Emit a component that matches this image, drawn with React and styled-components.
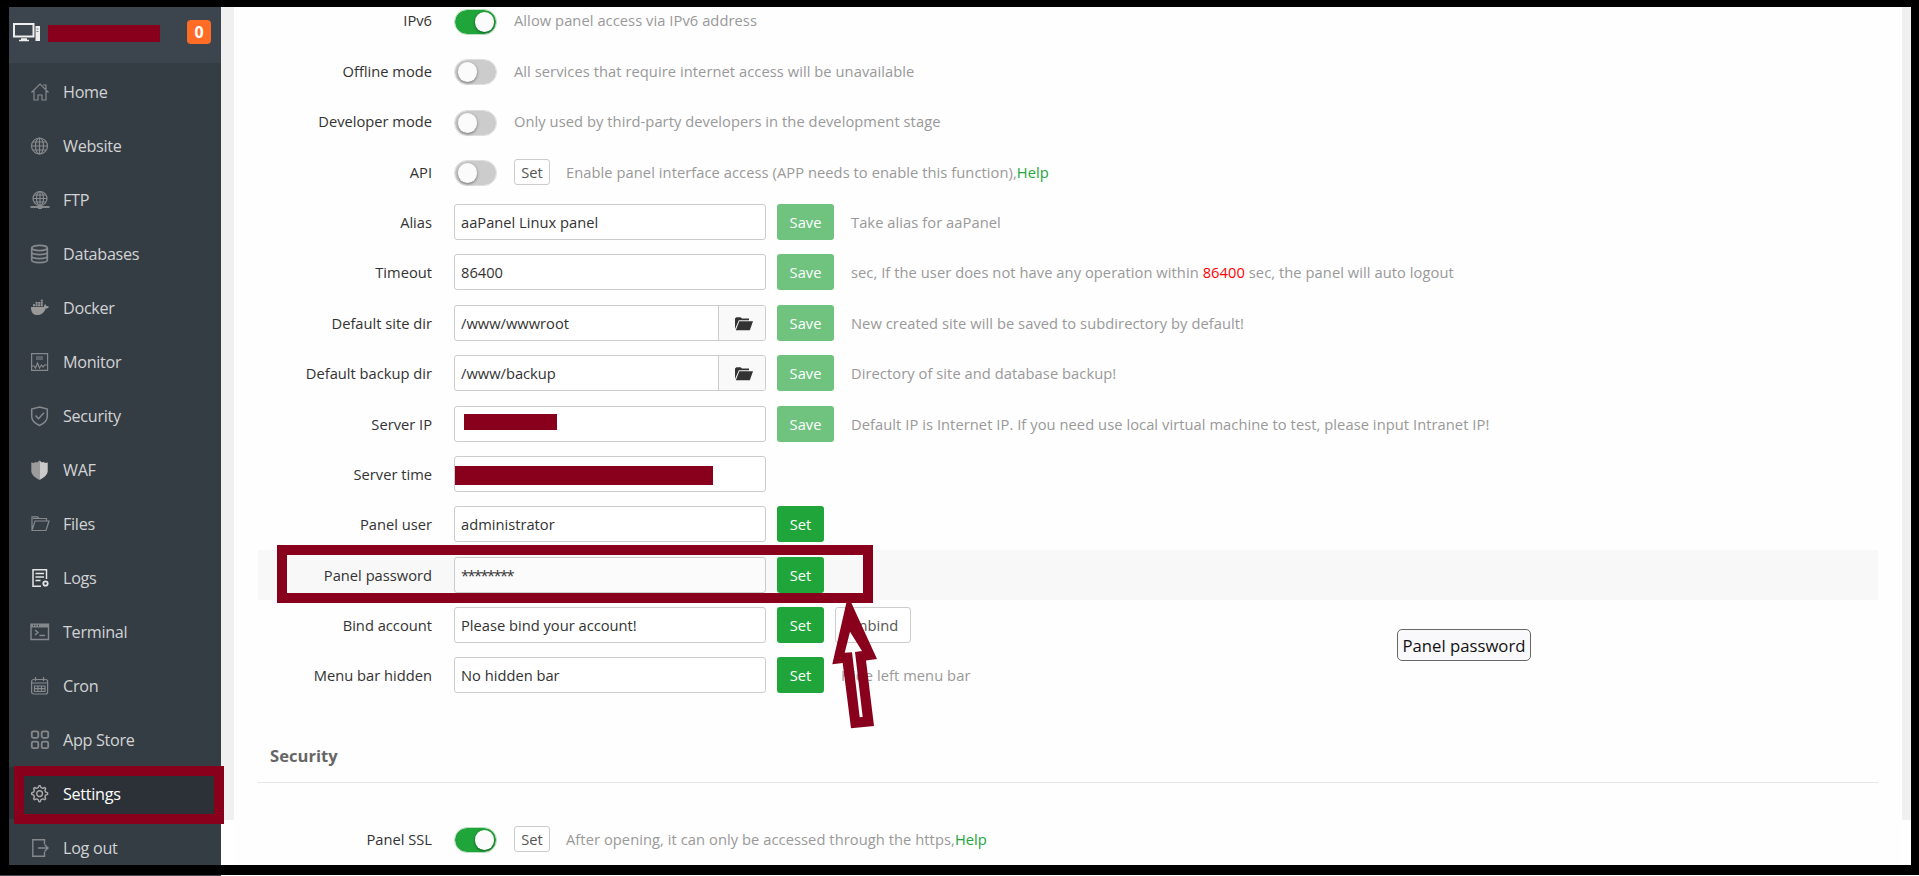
import React from "react";
import styled, { createGlobalStyle } from "styled-components";

const GlobalStyle = createGlobalStyle`
  * {
    box-sizing: border-box;
  }
  body {
    margin: 0;
    overflow: hidden;
    background: #000;
    font-family: "Open Sans", "Noto Sans", sans-serif;
  }
`;

const Page = styled.div`
  position: relative;
  display: flex;
  flex-direction: column;
  width: 1919px;
  height: 876px;
  overflow: hidden;
  background: #000;
`;

const Screen = styled.div`
  display: flex;
  height: 858px;
  margin: 7px 8px 10px 9px;
  background: #fff;
`;

const BottomEdge = styled.div`
  height: 1px;
  background: #fff;
  border-left: 221px solid #42464d;
`;

const Sidebar = styled.aside`
  width: 212px;
  overflow: hidden;
  background: #353d44;
`;

const SidebarHeader = styled.div`
  display: flex;
  align-items: center;
  height: 56px;
  padding: 0 10px 6px 4px;
  background: #3c444d;
`;

const Redacted = styled.span`
  display: block;
  width: ${props => props.$width}px;
  height: ${props => props.$height}px;
  margin: ${props => props.$margin || "0"};
  background: #88001b;
`;

const MessageBadge = styled.span`
  width: 24px;
  height: 24px;
  margin-left: auto;
  border-radius: 4px;
  background: #ff6c26;
  color: white;
  font-size: 16px;
  font-weight: 700;
  line-height: 25px;
  text-align: center;
`;

const MenuItem = styled.div`
  display: flex;
  align-items: center;
  gap: 14px;
  height: 52px;
  margin-top: 2px;
  padding-left: 22px;
  color: ${props => props.$active ? "#fff" : "#d2d3d4"};
  background: ${props => props.$active ? "#2c3138" : "transparent"};
  font-size: 16.2px;
  letter-spacing: -0.3px;
  svg {
    width: 18px;
    height: 18px;
    margin-top: 1px;
    flex: none;
    overflow: visible;
    color: ${props => props.$bright ? "#e4e4e4" : "#85898c"};
  }
  span {
    padding-top: 2px;
  }
`;

const Gutter = styled.div`
  width: ${props => props.$width}px;
  height: 813px;
  background: #f0f0f0;
`;

const Content = styled.main`
  width: 1668px;
  padding: 0 24px;
  overflow: hidden;
  background: #fefefe;
`;

const Form = styled.div`
  margin-top: ${props => props.$top}px;
`;

const FormRow = styled.div`
  display: flex;
  align-items: center;
  height: 50.4px;
  background: ${props => props.$hover ? "#f8f8f8" : "transparent"};
  color: #333;
  font-size: 14.7px;
  white-space: nowrap;
`;

const Label = styled.div`
  width: 174px;
  margin-right: 22px;
  text-align: right;
`;

const Switch = styled.div`
  display: flex;
  align-items: center;
  justify-content: ${props => props.$on ? "flex-end" : "flex-start"};
  width: 43px;
  height: 26px;
  margin: 3px 17px 0 0;
  padding: 0 ${props => props.$on ? 2 : 3}px;
  border: 1px solid ${props => props.$on ? "#b9dfc1" : "#dedede"};
  border-radius: 13px;
  background: ${props => props.$on ? "#20a53a" : "#ccc"};
  background-clip: padding-box;
  span {
    width: 19px;
    height: 20px;
    border-radius: 10px;
    background: #fbfbfb;
    box-shadow: 0 1px 3px rgba(0, 0, 0, 0.45);
  }
`;

const Field = styled.div`
  display: flex;
  align-items: center;
  width: 312px;
  height: 36px;
  padding-left: ${props => props.$flush ? 0 : 6}px;
  border: 1px solid #ccc;
  border-radius: 3px;
  background: ${props => props.$hover ? "#fbfbfb" : "#fff"};
`;

const Secret = styled.span`
  letter-spacing: -1.6px;
`;

const FolderButton = styled.div`
  display: flex;
  align-items: center;
  justify-content: center;
  width: 47px;
  height: 34px;
  margin-left: auto;
  padding: 2px 0 0 3px;
  border-left: 1px solid #ccc;
  border-radius: 0 2px 2px 0;
  background: #f9f9f9;
  color: #333;
`;

const Button = styled.div`
  display: flex;
  align-items: center;
  justify-content: center;
  width: ${props => props.$save ? 57 : 47}px;
  height: 36px;
  margin-left: 11px;
  border-radius: 3px;
  background: ${props => props.$save ? "#6fc37f" : "#20a53a"};
  color: white;
`;

const PlainButton = styled(Button)`
  width: ${props => props.$width}px;
  height: ${props => props.$small ? 26 : 36}px;
  margin-left: ${props => props.$small ? 0 : 11}px;
  border: 1px solid #ccc;
  background: #fff;
  color: #555;
`;

const Hint = styled.div`
  margin-left: ${props => props.$left || 0}px;
  color: #999;
  letter-spacing: 0.06px;
  a {
    color: #20a53a;
  }
  em {
    color: #f00;
    font-style: normal;
  }
`;

const SectionTitle = styled.h2`
  height: 82px;
  margin: 0;
  padding: 43px 0 0 12px;
  border-bottom: 1px solid #e6e6e6;
  color: #666;
  font-size: 16.6px;
  font-weight: 700;
  line-height: 24px;
`;

const Tooltip = styled.div`
  position: absolute;
  left: 1397px;
  top: 629px;
  width: 134px;
  height: 32px;
  border: 1px solid #676767;
  border-radius: 5px;
  background: #f9f9fb;
  color: #111;
  font-size: 16.7px;
  line-height: 32px;
  text-align: center;
  white-space: nowrap;
`;

// red frames drawn over the page
const Marker = styled.div`
  position: absolute;
  left: ${props => props.$x}px;
  top: ${props => props.$y}px;
  width: ${props => props.$width}px;
  height: ${props => props.$height}px;
  border: 10px solid #88001b;
`;

const Arrow = styled.svg`
  position: absolute;
  left: 830px;
  top: 596px;
`;

const Line = ({ children, width = 1.2 }) => (
  <svg viewBox="0 0 18 18" fill="none" stroke="currentColor" strokeWidth={width}>
    {children}
  </svg>
);

const icons = {
  home: (
    <Line>
      <path d="M.5 9.5 9 1l8.500 8.500M3 8v9h4v-5h4v5h4V8M12 2h3v4" />
    </Line>
  ),
  website: (
    <Line>
      <circle cx="8.500" cy="9" r="8" />
      <ellipse cx="8.500" cy="9" rx="4" ry="8" />
      <path d="M8.500 1v16M.5 9h16M2 5h13M2 13h13" />
    </Line>
  ),
  ftp: (
    <Line>
      <circle cx="9" cy="7.500" r="7" />
      <ellipse cx="9" cy="7.500" rx="3.500" ry="7" />
      <path d="M9 .5v14M2 7.500h14M3 4h12M3 11h12" />
      <path d="M-.5 16h19M7 16h4" strokeWidth="1.800" />
      <path d="M7 16h4" strokeWidth="4" />
    </Line>
  ),
  databases: (
    <Line width={1.7}>
      <ellipse cx="8.500" cy="3" rx="7.800" ry="2.600" />
      <path d="M.7 3v12c0 3.400 15.600 3.400 15.600 0V3M.7 7c0 3.400 15.600 3.400 15.600 0M.7 11c0 3.400 15.600 3.400 15.600 0" />
    </Line>
  ),
  docker: (
    <svg viewBox="0 0 18 18" fill="#999">
      <path d="M0 8h12.600c1-.8.6-2.300 1.400-3 .9.600 1.200 1.300 1.100 2 1.100-.1 2.100.1 2.900.7-.6 1.300-1.700 1.800-3.300 1.800C13.200 13.500 10.600 16 6.500 16 2 16-.1 13.600 0 8Z" />
      <path d="M2 5.300h2v2H2zM4.600 5.300h2v2h-2zM7.200 5.300h2v2h-2zM9.800 5.300h2v2h-2zM4.600 3h2v1.800h-2zM7.200 3h2v1.800h-2zM9.800 3h2v1.800h-2zM9.800.8h2v1.700h-2z" />
    </svg>
  ),
  monitor: (
    <Line>
      <path d="M.6.6h16v16.800H.6zM5 4h7M5 6h7" />
      <path d="M1 13h2l1.500 2 2-5 2 5 2-3 1.500 2 1.500-2h3" />
    </Line>
  ),
  security: (
    <Line width={1.5}>
      <path d="M8.500 0 16.300 2v7.500c0 4-3.300 7-7.800 9-4.500-2-7.800-5-7.800-9V2Z" />
      <path d="m4.500 8.500 3 3.200 5.500-6" />
    </Line>
  ),
  waf: (
    <svg viewBox="0 0 18 18">
      <path d="M8.500-.5 6 1.500 4 .8 3.500 2 .3 1.500V10c0 3.500 3.500 6.500 8.200 9Z" fill="#9b9b9b" />
      <path d="m8.500-.5 2.500 2 2-.7.500 1.200 3.200-.5V10c0 3.500-3.500 6.500-8.200 9Z" fill="#cacaca" />
    </svg>
  ),
  files: (
    <Line>
      <path d="M1 15.500V1.800h5.500L8 3.500h7.500V6M1 15.500 4 6h14l-3 9.500ZM2 3.500h6" />
    </Line>
  ),
  logs: (
    <Line width={1.5}>
      <path d="M10 17.300H2V.8h13.500V10M4.500 4.500h8.500M4.500 8h8.500M4.500 11.500h5" />
      <circle cx="14.500" cy="14.500" r="2.200" strokeWidth="1.800" />
    </Line>
  ),
  terminal: (
    <Line width={1.4}>
      <path d="M0 1.200h17.500v15.300H0z" />
      <path d="M0 3h17.500" strokeWidth="3" />
      <path d="m4 7 3 2.500L4 12M8.500 12.500H14" />
      <path d="M2 2.500h1M4.500 2.500h1M7 2.500h1" stroke="#353d44" />
    </Line>
  ),
  cron: (
    <Line>
      <rect x=".6" y="2.500" width="16" height="14.500" rx="2" />
      <path d="M1 6h15.500M4.500 0v4M12.500 0v4M3.500 9h10.500v5.500H3.500zM3.500 11.700H14M7 9v5.500M10.500 9v5.500" />
    </Line>
  ),
  store: (
    <Line width={1.8}>
      <rect x=".8" y=".3" width="6.500" height="6.500" rx="1.500" />
      <rect x="10.700" y=".3" width="6.500" height="6.500" rx="1.500" />
      <rect x=".8" y="10.700" width="6.500" height="6.500" rx="1.500" />
      <rect x="10.700" y="10.700" width="6.500" height="6.500" rx="1.500" />
    </Line>
  ),
  settings: (
    <svg viewBox="0 0 18 18" fill="none" stroke="#aaa" strokeWidth="1.400" strokeLinejoin="round">
      <path d="M7.200 2.600 8 .7h1.200l.8 1.900 1.800.7 1.900-.8 1 .9-.8 2 .7 1.600 2 .8v1.500l-2 .8-.7 1.700.8 2-1 .9-1.900-.8-1.800.8-.8 2H8l-.8-2-1.700-.8-1.900.8-1-.9.8-2-.7-1.700-2-.8V7.800l2-.8.7-1.600-.8-2 1-.9 1.900.8Z" />
      <circle cx="8.600" cy="8.600" r="2.900" />
    </svg>
  ),
  logout: (
    <Line width={1.4}>
      <path d="M13.500 5V.7H1.800v16.600h11.700V13M7 9h10M13.500 5.500 17 9l-3.500 3.500" />
    </Line>
  )
};

const menus = [
  { name: "Home", icon: "home" },
  { name: "Website", icon: "website" },
  { name: "FTP", icon: "ftp" },
  { name: "Databases", icon: "databases" },
  { name: "Docker", icon: "docker" },
  { name: "Monitor", icon: "monitor" },
  { name: "Security", icon: "security" },
  { name: "WAF", icon: "waf" },
  { name: "Files", icon: "files" },
  { name: "Logs", icon: "logs", bright: true },
  { name: "Terminal", icon: "terminal" },
  { name: "Cron", icon: "cron" },
  { name: "App Store", icon: "store" },
  { name: "Settings", icon: "settings", active: true },
  { name: "Log out", icon: "logout" }
];

const ComputerIcon = () => (
  <svg width="28" height="20" viewBox="0 0 28 20" fill="none" stroke="#eee">
    <path d="M1 2h19.500v12.500H1z" strokeWidth="2" />
    <path d="M8 17h6M6 18.500h10" strokeWidth="1.500" />
    <path d="M22.500 4h4.500v15h-4.500z" fill="#eee" stroke="none" />
    <path d="M23.500 7h2M23.500 9.500h2" stroke="#7d838a" />
  </svg>
);

const FolderIcon = () => (
  <svg width="18" height="14" viewBox="0 0 18 14" fill="currentColor">
    <path d="M0 12V1.500L1.500.3h4L7 1.500h7v1.700H3.800L0 12Z" />
    <path d="M4.300 4.300H18L14.800 13.300H.8Z" />
  </svg>
);

const SwitchRow = ({ label, on, set, children }) => (
  <FormRow>
    <Label>{label}</Label>
    <Switch $on={on}><span /></Switch>
    {set && <PlainButton $small $width={36}>Set</PlainButton>}
    <Hint $left={set ? 16 : 0}>{children}</Hint>
  </FormRow>
);

const FieldRow = ({ label, value, folder, button, hover, flush, extra, children }) => (
  <FormRow $hover={hover}>
    <Label>{label}</Label>
    <Field $hover={hover} $flush={flush}>
      {value}
      {folder && <FolderButton><FolderIcon /></FolderButton>}
    </Field>
    {button && <Button $save={button === "Save"}>{button}</Button>}
    {extra}
    {children && <Hint $left={17}>{children}</Hint>}
  </FormRow>
);

const App = () => {
  return (
    <Page>
      <GlobalStyle />
      <Screen>
        <Sidebar>
          <SidebarHeader>
            <ComputerIcon />
            <Redacted $width={112} $height={17} $margin="3px 0 0 7px" />
            <MessageBadge>0</MessageBadge>
          </SidebarHeader>
          {menus.map(menu => (
            <MenuItem key={menu.name} $active={menu.active} $bright={menu.bright}>
              {icons[menu.icon]}
              <span>{menu.name}</span>
            </MenuItem>
          ))}
        </Sidebar>
        <Gutter $width={13} />
        <Content>
          <Form $top={-11.8}>
            <SwitchRow label="IPv6" on>Allow panel access via IPv6 address</SwitchRow>
            <SwitchRow label="Offline mode">All services that require internet access will be unavailable</SwitchRow>
            <SwitchRow label="Developer mode">Only used by third-party developers in the development stage</SwitchRow>
            <SwitchRow label="API" set>
              Enable panel interface access (APP needs to enable this function),<a>Help</a>
            </SwitchRow>
            <FieldRow label="Alias" value="aaPanel Linux panel" button="Save">Take alias for aaPanel</FieldRow>
            <FieldRow label="Timeout" value="86400" button="Save">
              sec, If the user does not have any operation within <em>86400</em> sec, the panel will auto logout
            </FieldRow>
            <FieldRow label="Default site dir" value="/www/wwwroot" folder button="Save">
              New created site will be saved to subdirectory by default!
            </FieldRow>
            <FieldRow label="Default backup dir" value="/www/backup" folder button="Save">
              Directory of site and database backup!
            </FieldRow>
            <FieldRow
              label="Server IP"
              value={<Redacted $width={93} $height={16} $margin="-4px 0 0 3px" />}
              button="Save"
            >
              Default IP is Internet IP. If you need use local virtual machine to test, please input Intranet IP!
            </FieldRow>
            <FieldRow label="Server time" flush value={<Redacted $width={258} $height={19} $margin="3px 0 0" />} />
            <FieldRow label="Panel user" value="administrator" button="Set" />
            <FieldRow label="Panel password" value={<Secret>********</Secret>} button="Set" hover />
            <FieldRow
              label="Bind account"
              value="Please bind your account!"
              button="Set"
              extra={<PlainButton $width={76}>Unbind</PlainButton>}
            />
            <FieldRow label="Menu bar hidden" value="No hidden bar" button="Set">Hide left menu bar</FieldRow>
          </Form>
          <SectionTitle>Security</SectionTitle>
          <Form $top={31}>
            <SwitchRow label="Panel SSL" on set>
              After opening, it can only be accessed through the https,<a>Help</a>
            </SwitchRow>
          </Form>
        </Content>
        <Gutter $width={9} />
      </Screen>
      <BottomEdge />
      <Tooltip>Panel password</Tooltip>
      <Marker $x={14} $y={766} $width={210} $height={58} />
      <Marker $x={277} $y={545} $width={596} $height={58} />
      <Arrow width="50" height="136" viewBox="830 596 50 136">
        <path
          fill="#88001b"
          fillRule="evenodd"
          d="M847 600L832.300 664.300L842.700 663L851 728.300L874 726L866 660.500L877 659L850 600ZM850 631.700L862 651L855 652L862.700 717L859.700 717.300L852 652.300L844.700 652.700Z"
        />
      </Arrow>
    </Page>
  );
};

export default App;
